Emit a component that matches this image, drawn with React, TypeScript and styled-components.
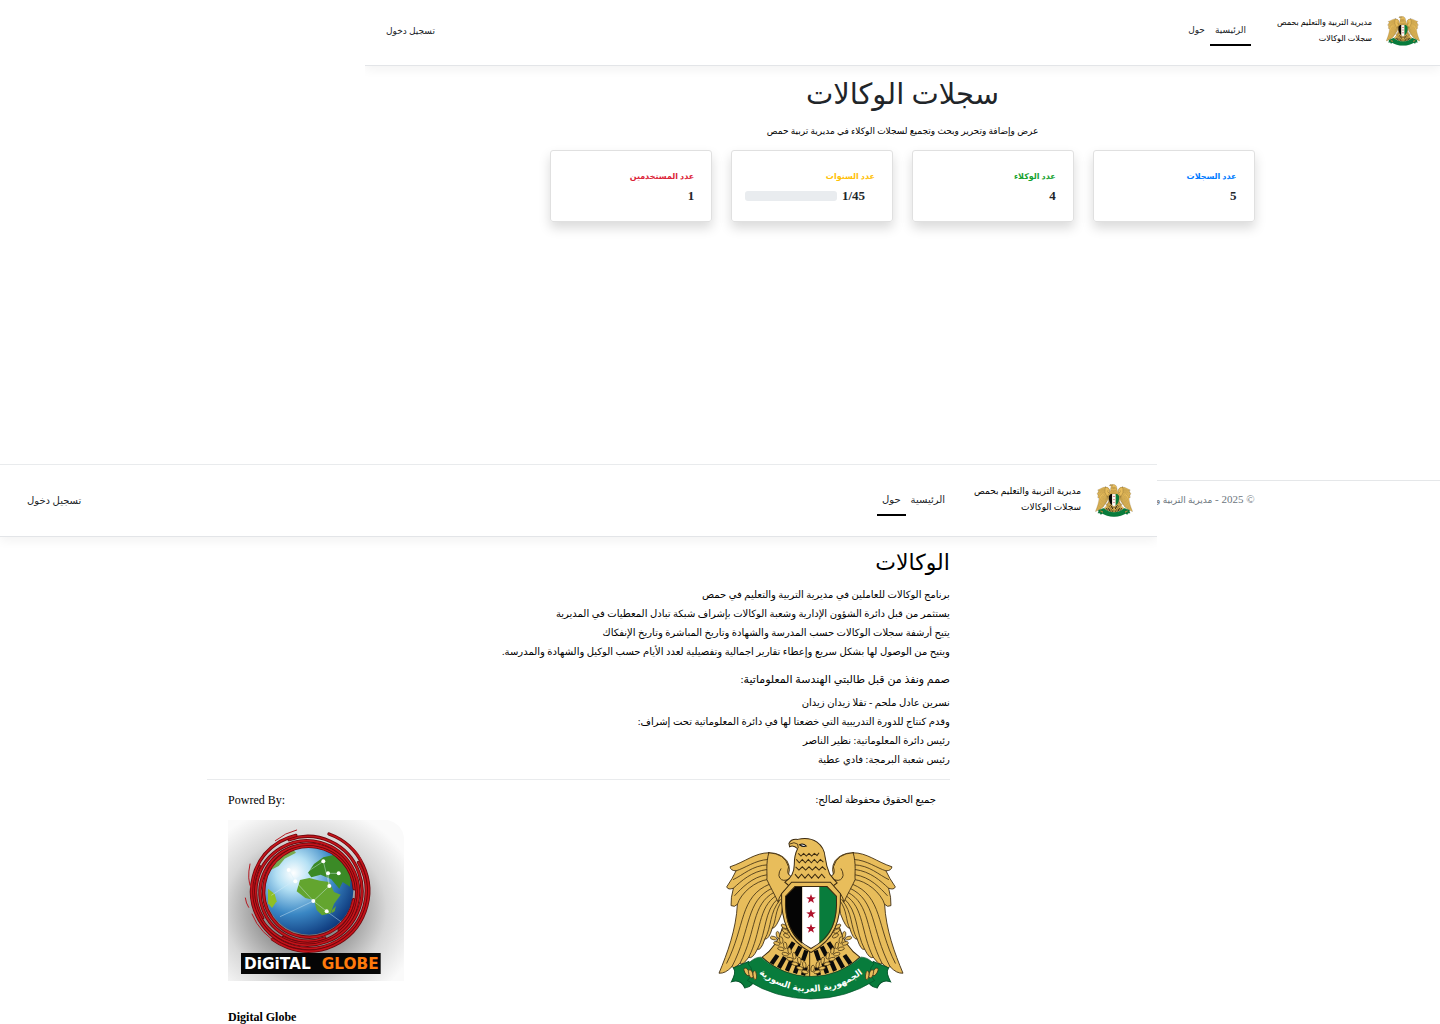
import React from "react";
import styled, { createGlobalStyle } from "styled-components";

const GlobalStyle = createGlobalStyle`
  *, *::before, *::after { box-sizing: border-box; }
  html, body { margin: 0; background: #fff; }
  body {
    font-family: "Liberation Serif", "DejaVu Sans", serif;
    color: #212529;
  }
  h1, h2, h3, p { margin: 0; font-weight: 400; }
`;

const Stage = styled.div`
  display: grid;
  grid-template-columns: 365fr 792fr 283fr;
  grid-template-rows: 464px auto;
  min-height: 100vh;
`;

const HomeWindow = styled.div`
  grid-column: 2 / 4;
  grid-row: 1 / 3;
  background: #fff;
  min-width: 0;
`;

const AboutWindow = styled.div`
  grid-column: 1 / 3;
  grid-row: 2;
  z-index: 1;
  background: #fff;
  border-top: 1px solid #e9ebed;
  min-width: 0;
  overflow: hidden;
`;

const Bar = styled.header<{ $large?: boolean }>`
  display: flex;
  align-items: center;
  height: ${(p) => (p.$large ? 72 : 66)}px;
  padding: ${(p) => (p.$large ? "0 24px 0 27px" : "0 20px 4px 21px")};
  border-bottom: 1px solid #e3e5e8;
  box-shadow: 0 4px 10px rgba(0, 0, 0, 0.05);
  clip-path: inset(0 0 -20px 0);
  font-size: ${(p) => (p.$large ? 10 : 9)}px;
`;

const Brand = styled.a`
  display: flex;
  align-items: center;
  gap: 14px;
  color: #000;
  text-decoration: none;
`;

const BrandText = styled.span<{ $large?: boolean }>`
  padding-bottom: ${(p) => (p.$large ? 3 : 0)}px;
  font-size: ${(p) => (p.$large ? 9 : 8)}px;
  line-height: 16px;
  white-space: nowrap;
`;

const Nav = styled.nav<{ $large?: boolean }>`
  display: flex;
  flex: 1;
  margin-right: ${(p) => (p.$large ? 24 : 26)}px;
`;

const NavLink = styled.a<{ $active?: boolean }>`
  padding: 7px 5px 6px;
  line-height: 16px;
  color: #212529;
  text-decoration: none;
  white-space: nowrap;
  border-bottom: 2px solid ${(p) => (p.$active ? "#000" : "transparent")};
`;

const Login = styled.a`
  color: #212529;
  line-height: 16px;
  text-decoration: none;
  white-space: nowrap;
`;

const Dashboard = styled.main`
  display: flex;
  flex-direction: column;
  align-items: center;
  height: 414px;
  padding-top: 8px;
`;

const Title = styled.h1`
  font-size: 29px;
  line-height: 40px;
`;

const Lead = styled.p`
  margin-top: 8px;
  font-size: 9px;
  line-height: 18px;
  color: #000;
`;

const Container = styled.div`
  width: 65.5%;
  margin: 0 auto;
`;

const Cards = styled(Container)`
  display: grid;
  grid-template-columns: repeat(4, 1fr);
  gap: 19px;
  margin-top: 10px;
`;

const Card = styled.section`
  height: 72px;
  padding: 17px 17px 0 13px;
  border: 1px solid #e0e0e0;
  border-radius: 3px;
  box-shadow: 0 6px 12px rgba(0, 0, 0, 0.15);
`;

const CardLabel = styled.h2<{ $color: string }>`
  font-size: 8px;
  font-weight: 700;
  line-height: 18px;
  color: ${(p) => p.$color};
`;

const CardValue = styled.div<{ $inset?: boolean }>`
  display: flex;
  align-items: center;
  gap: 5px;
  padding-right: ${(p) => (p.$inset ? 10 : 0)}px;
  font-size: 13px;
  font-weight: 700;
  line-height: 20px;
`;

const Track = styled.div`
  flex: 1;
  height: 10px;
  border-radius: 3px;
  background: #e9ecef;
`;

const Footer = styled.footer`
  border-top: 1px solid #e5e7e9;
  font-size: 11px;
  line-height: 36px;
  color: #6c757d;
  white-space: nowrap;
`;

const FooterName = styled.span`
  font-size: 9px;
`;

const About = styled.main`
  width: 64.2%;
  margin: 0 auto;
  padding-top: 8px;
  color: #000;
`;

const AboutTitle = styled.h1`
  font-size: 22px;
  line-height: 36px;
`;

const Lines = styled.div`
  display: flex;
  flex-direction: column;
  margin-top: 4px;
  font-size: 10px;
  line-height: 19px;
`;

const Subtitle = styled.h2`
  margin-top: 8px;
  font-size: 11px;
  line-height: 20px;
`;

const Columns = styled.div`
  display: grid;
  grid-template-columns: 1fr 1fr;
  margin-top: 10px;
  padding: 0 14px 0 21px;
  border-top: 1px solid #e9ebed;
`;

const Credit = styled.section`
  display: flex;
  flex-direction: column;
  align-items: flex-start;
  font-size: 12px;
  line-height: 18px;
`;

const CreditTitle = styled.h3<{ $small?: boolean }>`
  margin: 11px 0;
  font-size: ${(p) => (p.$small ? 10 : 12)}px;
`;

const CreditName = styled.strong`
  padding: 27px 0 4px;
`;

const EagleFrame = styled.div`
  width: 250px;
  padding: 17px 32px 0;
`;

const Drawing = styled.svg`
  display: block;
`;

const GOLD = "#e8bd5b";
const INK = "#3b2a10";
const GREEN = "#087c3c";

function Wing() {
  return (
    <g stroke={INK} strokeWidth="2.6" strokeLinejoin="round" strokeLinecap="round">
      <path
        fill={GOLD}
        d="M210 220 C168 220 142 246 94 262 Q96 274 112 274 Q102 296 84 322 Q88 332 104 326 Q96 354 97 378 Q108 384 116 374 C112 450 86 520 61 580 Q80 582 100 560 Q104 570 124 550 Q132 558 150 532 Q160 540 176 508 Q186 514 198 478 Q210 480 220 446 Q232 446 248 402 L256 345 L272 318 L262 300 Q280 270 264 244 Q246 220 210 220 Z"
      />
      <g fill="none" strokeWidth="2.4">
        <path d="M112 274 C140 266 168 242 208 240" />
        <path d="M104 300 C134 286 160 258 206 256" />
        <path d="M104 326 C128 304 158 276 204 270" />
        <path d="M108 348 C128 326 160 292 203 286" />
        <path d="M116 374 C126 340 170 304 206 300" />
        <path d="M84 550 C140 440 122 350 212 314" />
        <path d="M100 560 C158 448 140 362 220 326" />
        <path d="M124 550 C174 452 158 374 226 338" />
        <path d="M150 532 C188 458 176 384 232 348" />
        <path d="M176 508 C204 456 194 394 238 356" />
        <path d="M198 478 C220 440 210 400 244 360" />
        <path d="M220 446 C234 420 226 396 250 362" />
      </g>
      <path
        fill={GOLD}
        d="M210 220 C200 252 206 286 204 300 C214 322 226 342 238 368 Q240 342 272 320 L262 302 Q282 296 274 288 Q262 284 269 262 Q258 222 210 220Z"
      />
      <path fill="none" d="M262 302 Q244 306 240 288 Q240 276 246 268" />
    </g>
  );
}

const wheatStem = [
  [230, 470], [240, 486], [252, 502], [265, 518], [279, 533], [294, 547], [309, 560], [324, 571],
];

function Half() {
  return (
    <g>
      <Wing />
      <path d="M190 532 Q236 500 252 440 L340 480 V592 Q250 590 190 532Z" fill={GOLD} stroke={INK} strokeWidth="3" />
      <g fill="none" stroke="#0b0b0b" strokeWidth="13">
        <path d="M218 552 L236 526" />
        <path d="M240 564 L258 532" />
        <path d="M264 573 L278 540" />
        <path d="M288 580 L299 550" />
        <path d="M270 510 L284 488" />
        <path d="M290 528 L304 500" />
        <path d="M312 542 L322 512" />
        <path d="M312 586 L320 562" />
      </g>
      <g fill={GOLD} stroke={INK} strokeWidth="2">
        {wheatStem.map(([x, y]) => (
          <g key={x}>
            <ellipse cx={x - 6} cy={y + 5} rx="10" ry="5" transform={`rotate(15 ${x - 6} ${y + 5})`} />
            <ellipse cx={x + 7} cy={y - 5} rx="10" ry="5" transform={`rotate(80 ${x + 7} ${y - 5})`} />
          </g>
        ))}
        {[440, 454, 468].map((y) => (
          <ellipse key={y} cx={y / 4 + 146} cy={y} rx="10" ry="5" transform={`rotate(30 ${y / 4 + 146} ${y})`} />
        ))}
      </g>
      <path d="M150 545 L104 564 Q114 576 98 606 Q126 596 138 624 Q162 622 172 590Z" fill={GREEN} stroke="#05532a" strokeWidth="3" />
    </g>
  );
}

function Tassels() {
  return (
    <g fill={GOLD} stroke={INK} strokeWidth="2">
      <ellipse cx="144" cy="576" rx="6" ry="13" transform="rotate(-30 144 576)" />
      <ellipse cx="156" cy="582" rx="6" ry="13" transform="rotate(-18 156 582)" />
      <ellipse cx="168" cy="586" rx="5" ry="13" transform="rotate(-6 168 586)" />
    </g>
  );
}

function star(cx: number, cy: number, r: number) {
  return Array.from({ length: 10 }, (_, i) => {
    const a = (Math.PI / 5) * i - Math.PI / 2;
    const d = i % 2 ? r * 0.4 : r;
    return `${(cx + d * Math.cos(a)).toFixed(1)},${(cy + d * Math.sin(a)).toFixed(1)}`;
  }).join(" ");
}

function Eagle({ width, motto }: { width: number; motto?: boolean }) {
  return (
    <Drawing width={width} height={Math.round(width * 0.88)} viewBox="58 174 556 488" aria-hidden={!motto}>
      <Half />
      <g transform="translate(672 0) scale(-1 1)">
        <Half />
      </g>
      <path
        d="M270 192 Q276 178 296 180 Q330 172 354 188 Q376 204 378 232 Q382 262 392 284 Q404 300 414 310 L398 322 H274 L258 308 Q286 290 286 256 Q286 226 296 208 Q284 196 272 202Z"
        fill={GOLD}
        stroke={INK}
        strokeWidth="3"
      />
      <path d="M272 194 Q286 186 296 194 L298 206" fill="none" stroke={INK} strokeWidth="2.5" />
      <path d="M302 196 Q312 190 322 200 Q312 204 302 196Z" fill="#fff" stroke="#111" strokeWidth="3" />
      <g fill="none" stroke={INK} strokeWidth="3">
        <path d="M298 222 l8 8 8-8 8 8 8-8 8 8 8-8 8 6 6-8" />
        <path d="M292 240 l9 10 9-10 9 10 9-10 9 10 9-10 9 10 9-10 9 8" />
        <path d="M290 262 l10 10 10-10 10 10 10-10 10 10 10-10 10 10 10-10 10 9" />
        <path d="M288 284 l10 12 10-12 10 12 10-12 10 12 10-12 10 12 10-12 10 12" />
      </g>
      <path d="M278 308 H394 L424 342 C426 420 408 480 336 518 C264 480 246 420 248 342Z" fill={GOLD} stroke={INK} strokeWidth="3" />
      <path d="M288 321 H310 V492 C272 464 256 420 260 350Z" fill="#050505" />
      <path d="M310 321 H361 V492 Q348 501 336 506 Q322 501 310 492Z" fill="#fff" />
      <path d="M361 321 H384 L412 350 C416 420 400 464 361 492Z" fill={GREEN} />
      <path d="M288 321 H384 L412 350 C416 420 400 472 336 506 C272 472 256 420 260 350Z" fill="none" stroke={INK} strokeWidth="3" />
      {[358, 403, 447].map((y) => (
        <polygon key={y} points={star(336, y, 15)} fill="#b0132b" />
      ))}
      <path
        d="M186 532 Q254 590 336 590 Q418 590 486 532 Q506 532 524 552 Q500 576 526 602 Q442 656 336 657 Q230 656 146 602 Q172 576 148 552 Q166 532 186 532Z"
        fill={GREEN}
        stroke="#05532a"
        strokeWidth="2"
      />
      <Tassels />
      <g transform="translate(672 0) scale(-1 1)">
        <Tassels />
      </g>
      {motto && (
        <>
          <path id="motto-curve" d="M172 574 Q246 634 336 635 Q426 634 500 574" fill="none" />
          <text fontFamily="'DejaVu Sans', sans-serif" fontSize="26" fontWeight="700" fill="#fff" textAnchor="middle" direction="rtl">
            <textPath href="#motto-curve" startOffset="50%">
              الجمهورية العربية السورية
            </textPath>
          </text>
        </>
      )}
    </Drawing>
  );
}

const swirls = [
  { r: 136, turn: 10, length: 820 },
  { r: 145, turn: 70, length: 860 },
  { r: 154, turn: 150, length: 880 },
  { r: 163, turn: 250, length: 900 },
  { r: 172, turn: 330, length: 860 },
  { r: 181, turn: 290, length: 620 },
];

function GlobeLogo() {
  return (
    <Drawing width="176" height="161" viewBox="0 0 528 483" role="img" aria-label="Digital Globe">
      <defs>
        <radialGradient id="halo" cx="44%" cy="56%" r="66%">
          <stop offset="0" stopColor="#505050" />
          <stop offset="0.4" stopColor="#989898" />
          <stop offset="0.7" stopColor="#d8d8d8" />
          <stop offset="1" stopColor="#fafafa" />
        </radialGradient>
        <radialGradient id="sea" cx="32%" cy="30%" r="78%">
          <stop offset="0" stopColor="#ffffff" />
          <stop offset="0.25" stopColor="#b4e0f4" />
          <stop offset="0.6" stopColor="#3a87c4" />
          <stop offset="1" stopColor="#0b3478" />
        </radialGradient>
      </defs>
      <path d="M0 0 H480 Q520 10 528 50 V483 H0Z" fill="url(#halo)" />
      <circle cx="244" cy="212" r="132" fill="url(#sea)" />
      <g fill="#63a52f">
        <path d="M216 180 L244 174 L276 182 L304 186 L318 216 L338 224 L318 252 L308 280 L282 286 L266 270 L258 240 L232 234 L206 214Z" />
        <path d="M240 158 L258 132 L286 112 L320 104 L352 132 L368 170 L366 200 L344 186 L334 206 L310 178 L278 164 L250 172Z" fill="#3b8a26" />
        <path d="M120 206 L140 222 L146 244 L132 264 L120 250Z" fill="#8fbf25" />
        <path d="M124 152 L150 110 L192 86 L204 98 L170 116 L152 138Z" fill="#77a94e" />
        <path d="M312 270 l12-12 -4 16 -10 6z" />
      </g>
      <g stroke="#d8f0fb" strokeWidth="2" opacity="0.65" fill="none">
        <path d="M182 150 L202 184 L256 243 L296 274 L340 306" />
        <path d="M130 226 Q200 180 286 124 M256 243 L304 198 L300 160 L332 160 M256 243 Q200 270 156 290 M286 124 L304 198" />
      </g>
      <g fill="#fff">
        {[[182, 150], [202, 184], [286, 124], [300, 160], [332, 160], [304, 198], [256, 243], [296, 274]].map(([x, y]) => (
          <circle key={`${x}-${y}`} cx={x} cy={y} r="6" />
        ))}
      </g>
      <g fill="none" strokeLinecap="round">
        {swirls.map(({ r, turn, length }) => (
          <g key={r} transform={`rotate(${turn} 240 215)`}>
            <circle cx="243" cy="215" r={r} stroke="#6e070c" strokeWidth="10" strokeDasharray={`${length} 2000`} />
            <circle cx="243" cy="215" r={r} stroke="#c4141b" strokeWidth="5" strokeDasharray={`${length} 2000`} />
          </g>
        ))}
        <path d="M142 62 Q172 38 206 30 M52 234 Q54 250 62 262 M72 282 Q96 342 158 374 M66 132 Q56 178 70 206 M370 80 Q392 98 402 126" stroke="#b51a22" strokeWidth="3" />
      </g>
      <rect x="39" y="399" width="419" height="63" fill="#050505" />
      <g fontFamily="'DejaVu Sans', sans-serif" fontSize="46" fontWeight="700">
        <text x="48" y="447" fill="#fff">DiGiTAL</text>
        <text x="452" y="447" textAnchor="end" fill="#ff7a0c">GLOBE</text>
      </g>
    </Drawing>
  );
}

function SiteBar({ large, active }: { large?: boolean; active: "home" | "about" }) {
  return (
    <Bar $large={large}>
      <Brand href="#home">
        <Eagle width={large ? 38 : 34} />
        <BrandText $large={large}>
          مديرية التربية والتعليم بحمص
          <br />
          سجلات الوكالات
        </BrandText>
      </Brand>
      <Nav $large={large}>
        <NavLink href="#home" $active={active === "home"}>الرئيسية</NavLink>
        <NavLink href="#about" $active={active === "about"}>حول</NavLink>
      </Nav>
      <Login href="#login">تسجيل دخول</Login>
    </Bar>
  );
}

const stats = [
  { label: "عدد السجلات", value: "5", color: "#007bff" },
  { label: "عدد الوكلاء", value: "4", color: "#16a22f" },
  { label: "عدد السنوات", value: "1/45", color: "#ffc107", progress: true },
  { label: "عدد المستخدمين", value: "1", color: "#dc2338" },
];

export default function App() {
  return (
    <>
      <GlobalStyle />
      <Stage>
        <HomeWindow dir="rtl">
          <SiteBar active="home" />
          <Dashboard>
            <Title>سجلات الوكالات</Title>
            <Lead>عرض وإضافة وتحرير وبحث وتجميع لسجلات الوكلاء في مديرية تربية حمص</Lead>
            <Cards>
              {stats.map((s) => (
                <Card key={s.label}>
                  <CardLabel $color={s.color}>{s.label}</CardLabel>
                  <CardValue $inset={s.progress}>
                    <span>{s.value}</span>
                    {s.progress && <Track />}
                  </CardValue>
                </Card>
              ))}
            </Cards>
          </Dashboard>
          <Footer>
            <Container>
              © 2025 - <FooterName>مديرية التربية و</FooterName>
            </Container>
          </Footer>
        </HomeWindow>
        <AboutWindow dir="rtl">
          <SiteBar large active="about" />
          <About>
            <AboutTitle>الوكالات</AboutTitle>
            <Lines>
              <p>برنامج الوكالات للعاملين في مديرية التربية والتعليم في حمص</p>
              <p>يستثمر من قبل دائرة الشؤون الإدارية وشعبة الوكالات بإشراف شبكة تبادل المعطيات في المديرية</p>
              <p>يتيح أرشفة سجلات الوكالات حسب المدرسة والشهادة وتاريخ المباشرة وتاريخ الإنفكاك</p>
              <p>ويتيح من الوصول لها بشكل سريع وإعطاء تقارير اجمالية وتفصيلية لعدد الأيام حسب الوكيل والشهادة والمدرسة.</p>
            </Lines>
            <Subtitle>صمم ونفذ من قبل طالبتي الهندسة المعلوماتية:</Subtitle>
            <Lines>
              <p>نسرين عادل ملحم - تقلا زيدان زيدان</p>
              <p>وقدم كنتاج للدورة التدريبية التي خضعتا لها في دائرة المعلوماتية تحت إشراف:</p>
              <p>رئيس دائرة المعلوماتية: نظير الناصر</p>
              <p>رئيس شعبة البرمجة: فادي عطية</p>
            </Lines>
            <Columns>
              <Credit>
                <CreditTitle $small>جميع الحقوق محفوظة لصالح:</CreditTitle>
                <EagleFrame>
                  <Eagle width={186} motto />
                </EagleFrame>
              </Credit>
              <Credit dir="ltr">
                <CreditTitle>Powred By:</CreditTitle>
                <GlobeLogo />
                <CreditName>Digital Globe</CreditName>
              </Credit>
            </Columns>
          </About>
        </AboutWindow>
      </Stage>
    </>
  );
}
